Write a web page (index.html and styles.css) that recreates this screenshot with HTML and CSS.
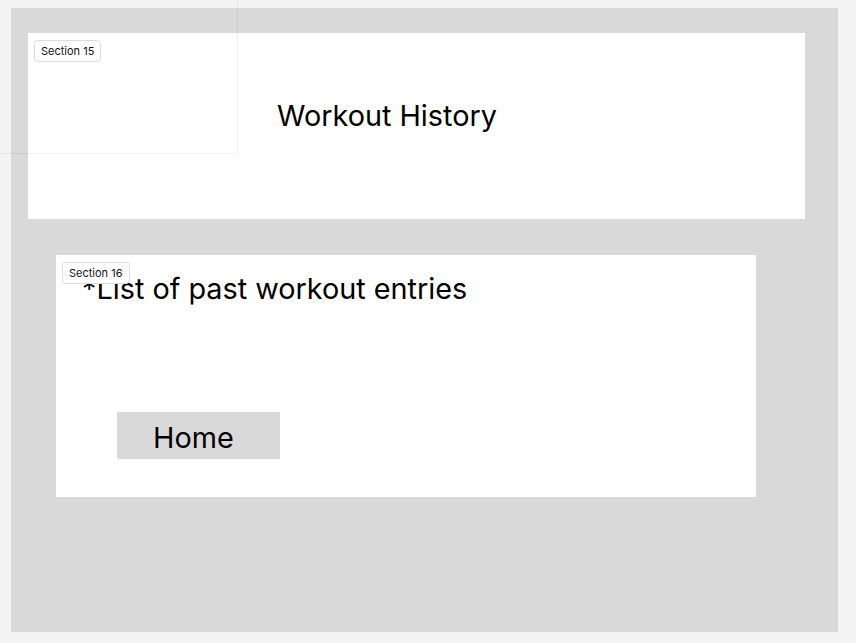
FILE: index.html
```html
<!DOCTYPE html>
<html>
<head>
<meta charset="utf-8">
<link rel="stylesheet" href="styles.css">
</head>
<body>
<div class="frame">
  <section class="card card-header">
    <span class="badge">Section 15</span>
    <h1 class="title">Workout History</h1>
  </section>
  <section class="card card-list">
    <span class="badge">Section 16</span>
    <p class="list-text">*List of past workout entries</p>
    <button class="home-btn">Home</button>
  </section>
</div>
<div class="overlay"></div>
</body>
</html>
```

FILE: styles.css
```css
html, body {
  margin: 0;
  padding: 0;
  background: #f4f4f4;
  font-family: "Inter", "Noto Sans", sans-serif;
  color: #000;
}
.frame {
  box-sizing: border-box;
  margin: 8px 0 0 11px;
  width: 827px;
  height: 624px;
  background: #d9d9d9;
  padding: 25px 0 0 17px;
  display: flex;
  flex-direction: column;
}
.card {
  position: relative;
  background: #fff;
  box-sizing: border-box;
}
.card-header {
  width: 777px;
  height: 186px;
  padding: 66px 0 0 249px;
}
.card-list {
  width: 700px;
  height: 242px;
  margin: 36px 0 0 28px;
  padding: 17px 0 0 26px;
}
.badge {
  position: absolute;
  left: 6px;
  top: 7px;
  z-index: 2;
  box-sizing: border-box;
  height: 22px;
  padding: 0 6px;
  display: flex;
  align-items: center;
  font-size: 11px;
  background: #fff;
  border: 1px solid #dcdcdc;
  border-radius: 4px;
  color: #111;
}
.title {
  margin: 0;
  font-size: 28.8px;
  font-weight: 400;
  line-height: 34px;
}
.list-text {
  margin: 0;
  font-size: 28.8px;
  line-height: 34px;
}
.home-btn {
  display: block;
  margin: 106px 0 0 35px;
  width: 163px;
  height: 47px;
  border: none;
  background: #d9d9d9;
  font-family: inherit;
  font-size: 28.8px;
  color: #000;
  text-align: left;
  padding: 4px 0 0 36px;
}
.overlay {
  position: absolute;
  left: 0;
  top: 0;
  width: 237px;
  height: 153px;
  border-right: 1px solid rgba(0,0,0,0.06);
  border-bottom: 1px solid rgba(0,0,0,0.06);
  pointer-events: none;
}
```
